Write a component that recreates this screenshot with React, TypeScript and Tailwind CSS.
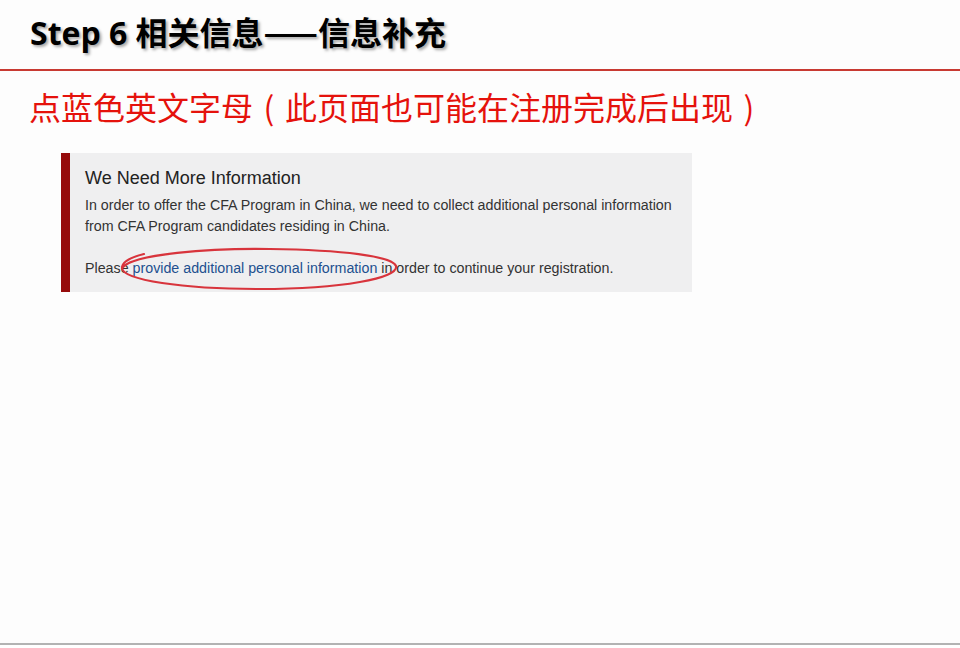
import React from "react";

const cjk = '"Noto Sans CJK SC", "Noto Sans", sans-serif';
const latinTitle = '"Open Sans", "Noto Sans CJK SC", sans-serif';
const webFont = '"Liberation Sans", Arial, sans-serif';

function InfoNotice() {
  return (
    <div
      className="relative ml-[61px] w-[631px] border-l-[9px] border-[#960b0b] bg-[#efeff0] pb-[13px] pl-[15px] pr-2 pt-[15px]"
      style={{ fontFamily: webFont }}
    >
      <h2 className="mb-[7px] text-[18px] leading-[20px] text-[#222]">We Need More Information</h2>
      <p className="whitespace-nowrap text-[14.25px] leading-[21px] text-[#333]">
        In order to offer the CFA Program in China, we need to collect additional personal information
        <br />
        from CFA Program candidates residing in China.
      </p>
      <p className="mt-[21px] whitespace-nowrap text-[14.25px] leading-[21px] text-[#333]">
        Please <span className="text-[#22508f]">provide additional personal information</span> in order to
        continue your registration.
      </p>

      {/* hand-drawn red circle around the link */}
      <svg
        className="pointer-events-none absolute left-0 top-0 overflow-visible"
        width="622"
        height="140"
        viewBox="0 0 622 140"
      >
        <path
          d="M 52 115 C 62 101, 140 95, 200 96 C 272 97, 322 103, 326 113 C 329 125, 272 136, 190 136 C 112 136, 53 127, 52 115 C 52 109, 62 104, 74 101"
          fill="none"
          stroke="#d8343c"
          strokeWidth="2.2"
          strokeLinecap="round"
        />
      </svg>
    </div>
  );
}

export default function App() {
  return (
    <div className="flex h-[648px] w-[960px] flex-col bg-white">
      <div className="flex flex-1 flex-col bg-[#fdfdfd]">
        {/* slide header */}
        <div className="h-[71px] border-b-2 border-[#c83a32] pl-[30px] pt-[15px]">
          <h1
            className="h-[32px] text-[32px] font-bold leading-[32px] text-black"
            style={{ fontFamily: latinTitle, textShadow: "2px 2px 3px rgba(0,0,0,0.35)" }}
          >
            Step 6 <span style={{ fontFamily: cjk }}>相关信息——信息补充</span>
          </h1>
        </div>

        <p
          className="mb-[31px] mt-[19px] h-[32px] pl-[29px] text-[32px] leading-[32px] text-[#e5120c]"
          style={{ fontFamily: cjk }}
        >
          点蓝色英文字母<span className="inline-block w-[1em] text-center">(</span>此页面也可能在注册完成后出现
          <span className="inline-block w-[1em] text-center">)</span>
        </p>

        <InfoNotice />
      </div>
      <div className="h-[2px] bg-[#b3b3b3]" />
      <div className="h-[3px] bg-white" />
    </div>
  );
}
